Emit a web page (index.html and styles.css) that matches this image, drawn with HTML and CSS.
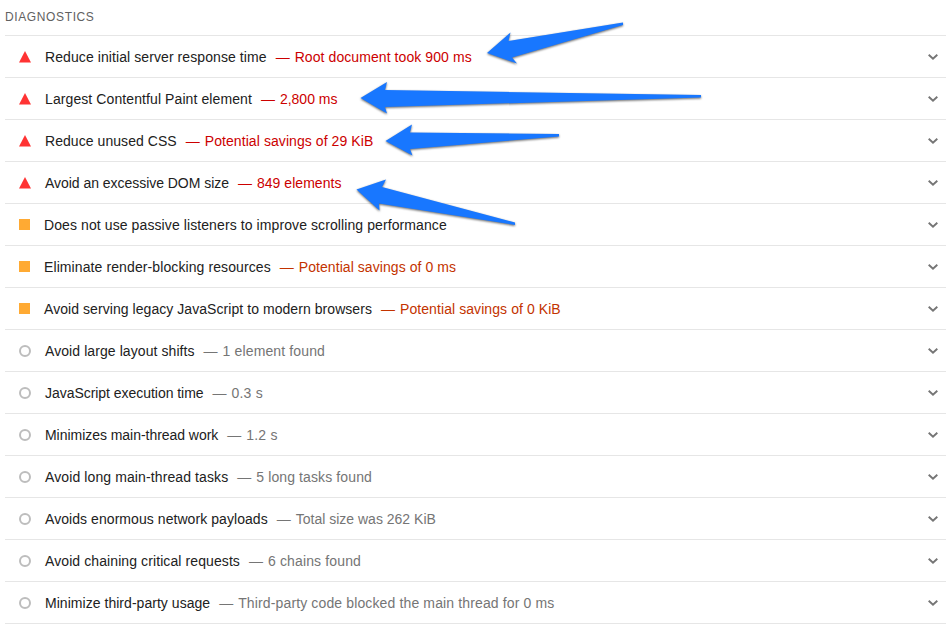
FILE: index.html
```html
<!DOCTYPE html>
<html lang="en">
<head>
<meta charset="utf-8">
<title>Diagnostics</title>
<link rel="stylesheet" href="styles.css">
</head>
<body>
<main class="diagnostics">
<h1 class="heading">DIAGNOSTICS</h1>
<ul class="audits" id="audits"></ul>
</main>
<svg class="arrows" width="952" height="627" viewBox="0 0 952 627" aria-hidden="true">
<path d="M487 53 510.500 32.500 508.500 41 623 22.500V25L512 57.500 517 63.500Z"/>
<path d="M360.500 98 387 82 385 90 701 95V97.500L385 107 387 113.500Z"/>
<path d="M385.500 141 412 124.500 410 132.500 559 134V136.500L410 149 412.500 155.500Z"/>
<path d="M356.500 189.500 386 179.500 382 187 515 222.500V225L379 203.500 379.500 210.500Z"/>
</svg>
<script src="app.js"></script>
</body>
</html>
```
FILE: styles.css
```css
* { box-sizing: border-box; }
body {
  margin: 0;
  background: #fff;
  color: #212121;
  font: 14px/20px "Liberation Sans", Arial, sans-serif;
}
.diagnostics { padding: 0 6px 0 5px; }
.heading {
  height: 35px;
  margin: 0;
  padding-top: 7px;
  color: #616161;
  font-size: 12px;
  font-weight: 400;
  letter-spacing: 0.62px;
}
.audits {
  margin: 0;
  padding: 0;
  list-style: none;
  border-bottom: 1px solid #e6e6e6;
}
.audit {
  display: flex;
  align-items: center;
  height: 42px;
  padding: 1px 8px 0 14px;
  border-top: 1px solid #e6e6e6;
  white-space: pre;
}
.marker { width: 12px; height: 12px; margin-right: 14px; flex: none; }
.average .marker { margin-right: 13px; }
.dash { margin: 0 5px 0 9px; }
.dash, .detail { color: #757575; }
.fail .dash, .fail .detail { color: #c00; }
.average .dash, .average .detail { color: #c33300; }
.chevron { width: 10px; height: 6px; margin-left: auto; flex: none; }
.chevron path { fill: none; stroke: #757575; stroke-width: 1.9; }
.fail .marker { fill: #f33; }
.average .marker { fill: #fa3; }
.info .marker { fill: none; stroke: #bdbdbd; stroke-width: 2; }
.arrows {
  position: absolute;
  top: 0;
  left: 0;
  fill: #1877ff;
  pointer-events: none;
  filter: drop-shadow(0 1.5px 1px rgba(0, 0, 0, 0.6));
}
```
FILE: app.js
```js
const shapes = {
  fail: '<path d="M6 0 12 11.500H0Z"/>',
  average: '<path d="M0 0H11V11H0Z"/>',
  info: '<circle cx="6" cy="6" r="5"/>'
};
// level, title, extra title width, detail, extra detail width
const audits = [
  ['fail', 'Reduce initial server response time', 3, 'Root document took 900 ms', 2],
  ['fail', 'Largest Contentful Paint element', 3, '2,800 ms', 0],
  ['fail', 'Reduce unused CSS', 1, 'Potential savings of 29 KiB', 2],
  ['fail', 'Avoid an excessive DOM size', -1, '849 elements', 0.5],
  ['average', 'Does not use passive listeners to improve scrolling performance', 6, '', 0],
  ['average', 'Eliminate render-blocking resources', 3.5, 'Potential savings of 0 ms', 1.5],
  ['average', 'Avoid serving legacy JavaScript to modern browsers', 3, 'Potential savings of 0 KiB', 2],
  ['info', 'Avoid large layout shifts', 2, '1 element found', 2],
  ['info', 'JavaScript execution time', -1, '0.3 s', 1],
  ['info', 'Minimizes main-thread work', -1, '1.2 s', 1],
  ['info', 'Avoid long main-thread tasks', 3, '5 long tasks found', 2],
  ['info', 'Avoids enormous network payloads', 2, 'Total size was 262 KiB', 0],
  ['info', 'Avoid chaining critical requests', 3, '6 chains found', 2],
  ['info', 'Minimize third-party usage', 1, 'Third-party code blocked the main thread for 0 ms', 6.5]
];
const text = (name, value, extra) =>
  `<span class="${name}" style="letter-spacing:${(extra / value.length).toFixed(4)}px">${value}</span>`;
document.getElementById('audits').innerHTML = audits.map(([level, title, titleExtra, detail, detailExtra]) =>
  `<li class="audit ${level}"><svg class="marker" viewBox="0 0 12 12">${shapes[level]}</svg>` +
  text('title', title, titleExtra) +
  (detail ? '<span class="dash">—</span>' + text('detail', detail, detailExtra) : '') +
  '<svg class="chevron" viewBox="0 0 10 6"><path d="M.7.7 5 4.700 9.300.7"/></svg></li>'
).join('');
```
